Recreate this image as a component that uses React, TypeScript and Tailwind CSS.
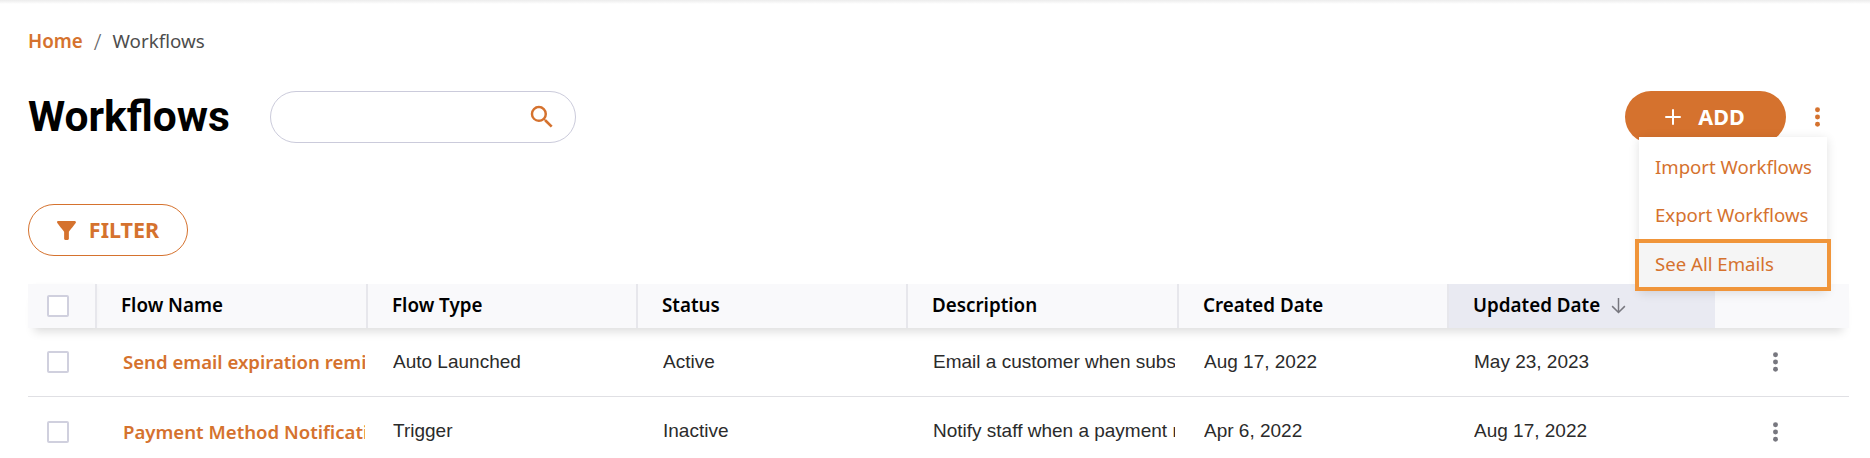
import React from 'react';
import { Plus } from 'lucide-react';

const columns = ['Flow Name', 'Flow Type', 'Status', 'Description', 'Created Date', 'Updated Date'];

const rows = [
  {
    name: 'Send email expiration reminder',
    type: 'Auto Launched',
    status: 'Active',
    description: 'Email a customer when subscription expires',
    created: 'Aug 17, 2022',
    updated: 'May 23, 2023',
  },
  {
    name: 'Payment Method Notification',
    type: 'Trigger',
    status: 'Inactive',
    description: 'Notify staff when a payment method changes',
    created: 'Apr 6, 2022',
    updated: 'Aug 17, 2022',
  },
];

const Kebab = ({ className }: { className: string }) => (
  <svg viewBox="0 0 6 24" className={className} fill="currentColor">
    <circle cx="3" cy="4" r="2.7" />
    <circle cx="3" cy="12" r="2.7" />
    <circle cx="3" cy="20" r="2.7" />
  </svg>
);

const Checkbox = () => <span className="block h-[22px] w-[22px] rounded-[2px] border-2 border-[#d0d0de] bg-white" />;

const gridCols = 'grid grid-cols-[67px_271px_270px_270px_271px_270px_268px_134px]';

export default function App() {
  return (
    <div className="relative h-[458px] w-[1870px] overflow-hidden bg-white font-['Noto_Sans',sans-serif]">
      <div className="h-[4px] bg-gradient-to-b from-[#ececec] to-white" />

      {/* breadcrumb */}
      <div className="mt-[25px] flex h-[24px] items-center pl-[28px] text-[18.8px]">
        <span className="font-semibold text-[#d5722e]">Home</span>
        <span className="mx-[11px] text-[22px] font-light text-[#666]">/</span>
        <span className="text-[#4d4d4d]">Workflows</span>
      </div>

      {/* title row */}
      <div className="mt-[38px] flex h-[52px] items-center pl-[28px]">
        <h1 className="w-[242px] font-['Roboto',sans-serif] text-[42.5px] font-bold leading-none text-black">Workflows</h1>
        <div className="flex h-[52px] w-[306px] items-center justify-end rounded-full border border-[#cbcbdb] pr-[18px]">
          <svg viewBox="0 0 24 24" className="h-[30px] w-[30px] text-[#d5722e]" fill="currentColor">
            <path d="M15.5 14h-.79l-.28-.27A6.471 6.471 0 0 0 16 9.5 6.5 6.5 0 1 0 9.5 16c1.61 0 3.09-.59 4.23-1.57l.27.28v.79l5 4.99L20.49 19l-4.99-5zm-6 0C7.01 14 5 11.99 5 9.5S7.01 5 9.5 5 14 7.01 14 9.5 11.99 14 9.5 14z" />
          </svg>
        </div>
        <div className="ml-auto flex items-center pr-[49px]">
          <button className="flex h-[52px] w-[161px] items-center justify-center gap-[13px] rounded-full bg-[#d5722e] pr-[5px] text-[21.5px] font-bold text-white">
            <Plus className="h-[24px] w-[24px]" strokeWidth={2} />
            ADD
          </button>
          <Kebab className="ml-[28px] h-[22px] w-[7px] text-[#d5722e]" />
        </div>
      </div>

      {/* filter */}
      <div className="mt-[61px] pl-[28px]">
        <button className="flex h-[52px] w-[160px] items-center justify-center gap-[13px] rounded-full border border-[#d5722e] text-[21.5px] font-bold text-[#d5722e]">
          <svg viewBox="4 4 16 16" className="h-[19px] w-[19px]" fill="currentColor">
            <path d="M4.25 5.61C6.27 8.2 10 13 10 13v6c0 .55.45 1 1 1h2c.55 0 1-.45 1-1v-6s3.72-4.8 5.74-7.39A.998.998 0 0 0 18.95 4H5.04c-.83 0-1.3.95-.79 1.61z" />
          </svg>
          FILTER
        </button>
      </div>

      {/* table */}
      <div className="ml-[28px] mt-[28px] w-[1821px]">
        <div className={`${gridCols} relative h-[44px] bg-[#f9f9fb] shadow-[0_10px_10px_-6px_rgba(0,0,0,0.13)]`}>
          <div className="flex items-center pl-[19px] shadow-[3px_0_5px_-2px_rgba(0,0,0,0.05)]">
            <Checkbox />
          </div>
          {columns.map((col) => (
            <div
              key={col}
              className={`flex items-center gap-[10px] border-l-2 border-[#e7e7ec] pb-[1px] pl-[24px] text-[18.8px] font-semibold text-black ${col === 'Updated Date' ? 'bg-[#e9eaf2]' : ''}`}
            >
              {col}
              {col === 'Updated Date' && (
                <svg viewBox="0 0 16 16" className="h-[17px] w-[17px] text-[#77777f]" fill="none" stroke="currentColor" strokeWidth="1.4">
                  <path d="M8 1v13.5M2 8.6l6 6 6-6" />
                </svg>
              )}
            </div>
          ))}
          <div />
        </div>
        {rows.map((row, i) => (
          <div key={row.name} className={`${gridCols} h-[69px] ${i === 0 ? 'border-b border-[#e0e0e4]' : ''}`}>
            <div className="flex items-center pl-[19px]">
              <Checkbox />
            </div>
            <div className="flex items-center overflow-hidden pl-[28px] pr-[1px]">
              <span className="block w-full overflow-hidden whitespace-nowrap text-[18.6px] font-semibold text-[#d5722e]">{row.name}</span>
            </div>
            {[row.type, row.status, row.description, row.created, row.updated].map((value) => (
              <div key={value} className="flex items-center overflow-hidden pl-[27px] pr-[2px] font-['Liberation_Sans',sans-serif] text-[19px] text-[#2b2b2b]">
                <span className="block w-full overflow-hidden whitespace-nowrap">{value}</span>
              </div>
            ))}
            <div className="flex items-center pl-[57px]">
              <Kebab className="h-[22px] w-[7px] text-[#77777f]" />
            </div>
          </div>
        ))}
      </div>

      {/* dropdown menu */}
      <div className="absolute left-[1639px] top-[137px] w-[188px] bg-white pt-[6px] text-[18.6px] text-[#d5722e] shadow-[0_2px_10px_rgba(0,0,0,0.12)]">
        <div className="flex h-[48px] items-center pl-[16px]">Import Workflows</div>
        <div className="flex h-[48px] items-center pl-[16px]">Export Workflows</div>
        <div className="-mx-[4px] flex h-[52px] items-center border-4 border-[#f0953a] bg-[#f5f5f5] pb-[3px] pl-[16px]">See All Emails</div>
      </div>
    </div>
  );
}
